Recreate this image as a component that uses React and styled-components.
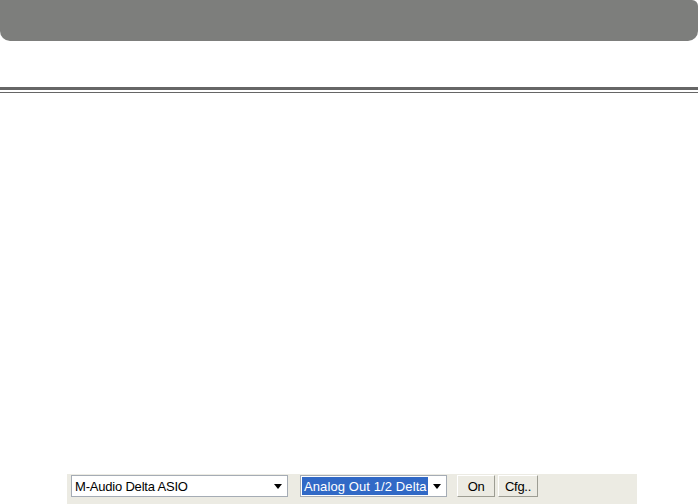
import React from "react";
import styled, { createGlobalStyle } from "styled-components";

const Global = createGlobalStyle`
  html, body { margin: 0; padding: 0; background: #ffffff; }
  body { width: 698px; height: 504px; overflow: hidden; font-family: "Liberation Sans", Arial, sans-serif; }
`;

const Page = styled.div`
  width: 698px;
  height: 504px;
  display: flex;
  flex-direction: column;
`;

const Header = styled.div`
  height: 41px;
  width: 698px;
  background: #7d7e7c;
  border-radius: 0 6px 10px 10px;
`;

const Rule = styled.div`
  margin-top: ${(p) => p.$top}px;
  height: ${(p) => p.$h}px;
  background: #666666;
`;

const Spacer = styled.div`
  flex: 1;
`;

const Strip = styled.div`
  margin-left: 67px;
  width: 570px;
  height: 30px;
  background: #ecebe3;
  display: flex;
  align-items: flex-start;
  padding-top: 1px;
  box-sizing: border-box;
`;

const Combo = styled.div`
  margin-left: ${(p) => p.$ml}px;
  width: ${(p) => p.$w}px;
  height: 22px;
  box-sizing: border-box;
  border: 1px solid #a5acb5;
  background: #ffffff;
  display: flex;
  align-items: stretch;
  padding: 1px;
`;

const ComboText = styled.div`
  flex: 1;
  display: flex;
  align-items: center;
  font-size: 13px;
  color: ${(p) => (p.$sel ? "#ffffff" : "#000000")};
  background: ${(p) => (p.$sel ? "#3169c6" : "transparent")};
  padding-left: 2px;
  white-space: nowrap;
  overflow: hidden;
  letter-spacing: ${(p) => (p.$sel ? "0.1px" : "-0.2px")};
`;

const Arrow = styled.div`
  width: 17px;
  display: flex;
  align-items: center;
  justify-content: center;
  background: #ffffff;
`;

const Button = styled.div`
  margin-left: ${(p) => p.$ml}px;
  width: ${(p) => p.$w}px;
  height: 22px;
  box-sizing: border-box;
  border-top: 1px solid #ffffff;
  border-left: 1px solid #ffffff;
  border-right: 1px solid #9d9d93;
  border-bottom: 1px solid #9d9d93;
  background: #ecebe3;
  display: flex;
  align-items: center;
  justify-content: center;
  font-size: 13px;
  letter-spacing: -0.3px;
  color: #000;
`;

const Tri = () => (
  <svg width="8" height="5" viewBox="0 0 8 5">
    <polygon points="0,0 8,0 4,5" fill="#000" />
  </svg>
);

export default function App() {
  return (
    <Page>
      <Global />
      <Header />
      <Rule $top={46} $h={3} />
      <Rule $top={2} $h={1} />
      <Spacer />
      <Strip>
        <Combo $ml={4} $w={217}>
          <ComboText>M-Audio Delta ASIO</ComboText>
          <Arrow><Tri /></Arrow>
        </Combo>
        <Combo $ml={12} $w={147}>
          <ComboText $sel>Analog Out 1/2 Delta</ComboText>
          <Arrow><Tri /></Arrow>
        </Combo>
        <Button $ml={10} $w={38}>On</Button>
        <Button $ml={3} $w={40}>Cfg..</Button>
      </Strip>
    </Page>
  );
}
